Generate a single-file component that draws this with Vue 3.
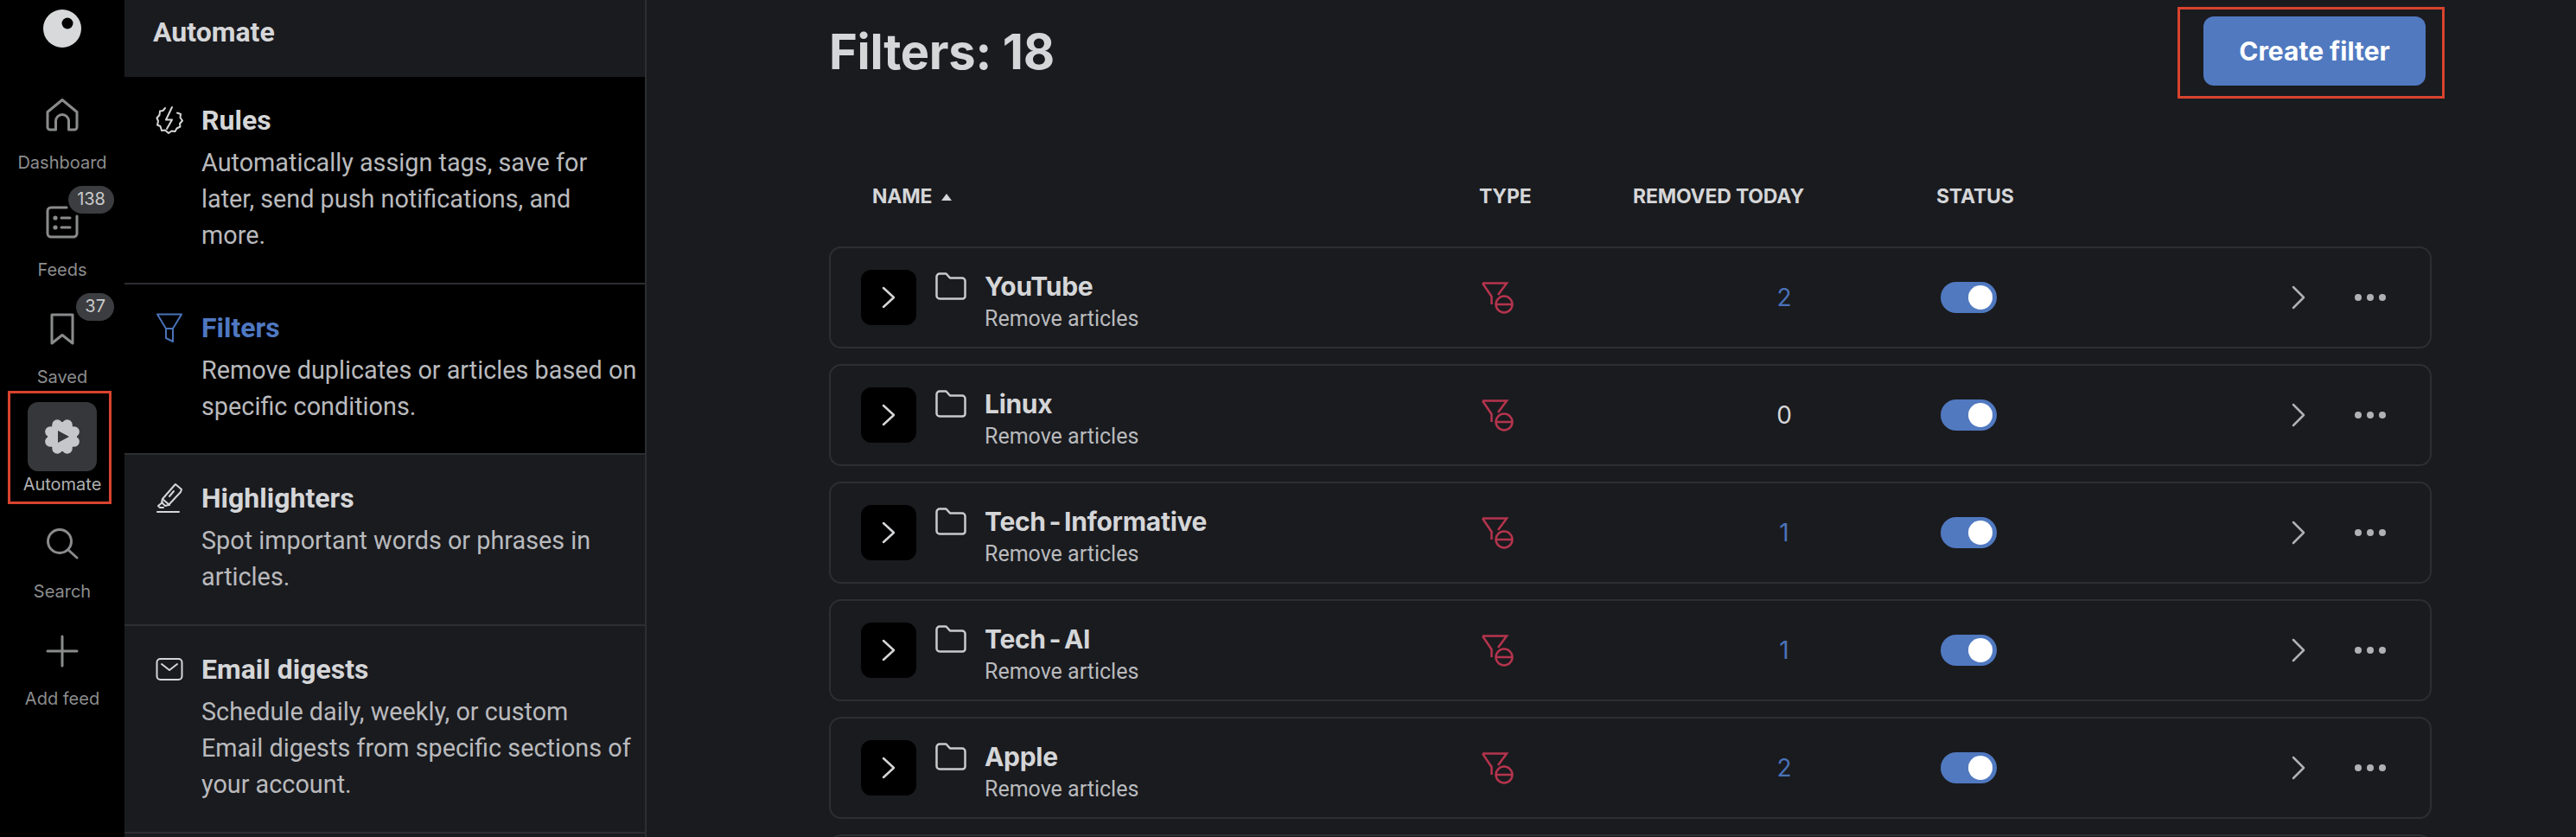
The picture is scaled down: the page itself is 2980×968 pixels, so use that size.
<template>
  <div class="app">
    <nav class="rail">
      <div class="logo">
        <svg width="44" height="44" viewBox="0 0 44 44">
          <circle cx="22" cy="22" r="22" fill="#d8d9da" />
          <circle cx="28" cy="16" r="6.5" fill="#000" />
        </svg>
      </div>
      <div v-for="item in navItems" :key="item.label" class="nav-item" :class="{ active: item.active }">
        <div class="nav-icon">
          <svg v-if="item.icon === 'home'" width="38" height="38" viewBox="0 0 38 38" class="line-icon">
            <path d="M2 15.500 19 1.500l17 14V33a3 3 0 0 1-3 3h-6.500V26a7.500 7.500 0 0 0-15 0v10H5a3 3 0 0 1-3-3z" />
          </svg>
          <svg v-else-if="item.icon === 'feeds'" width="38" height="38" viewBox="0 0 38 38" class="line-icon">
            <path d="M24 2H6a4 4 0 0 0-4 4v26a4 4 0 0 0 4 4h26a4 4 0 0 0 4-4V12" />
            <circle cx="11" cy="14" r="2.600" class="fill" />
            <circle cx="11" cy="25" r="2.600" class="fill" />
            <path d="M18 14h10M18 25h10" />
          </svg>
          <svg v-else-if="item.icon === 'saved'" width="30" height="38" viewBox="0 0 30 38" class="line-icon">
            <path d="M3 2h24v33L15 25.500 3 35z" />
          </svg>
          <svg v-else-if="item.icon === 'automate'" width="44" height="44" viewBox="0 0 44 44">
            <g fill="#c6c7ca">
              <circle cx="22" cy="22" r="17" />
              <circle v-for="lobe in lobes" :key="lobe.x" :cx="lobe.x" :cy="lobe.y" r="6" />
            </g>
            <path d="M17 15 30 22 17 29z" fill="#36373a" />
          </svg>
          <svg v-else-if="item.icon === 'search'" width="38" height="38" viewBox="0 0 38 38" class="line-icon">
            <circle cx="16" cy="16" r="13.500" />
            <path d="M26 26l10 9" />
          </svg>
          <svg v-else width="38" height="38" viewBox="0 0 38 38" class="line-icon">
            <path d="M19 2v34M2 19h34" />
          </svg>
        </div>
        <span class="nav-label">{{ item.label }}</span>
        <span v-if="item.badge" class="badge">{{ item.badge }}</span>
        <div v-if="item.active" class="red-box"></div>
      </div>
    </nav>

    <aside class="panel">
      <h2 class="panel-title">Automate</h2>
      <section
        v-for="section in sections"
        :key="section.title"
        class="section"
        :class="{ dark: section.dark, selected: section.selected, first: section.first }"
      >
        <div class="section-icon">
          <svg v-if="section.icon === 'rules'" width="32" height="34" viewBox="0 0 32 34" class="panel-icon">
            <path d="M11 3 8.500 6 5 6.500 4.500 11 1.500 14.500 3 18 2 22.500l3.500 1.500L7 29l4-.5 4 3.500 3.500-2.500 4 .5 2-3.500 4-2L28 21l3-3.500L28.500 14l.5-4-4-1.500" />
            <path d="M19 2l-7 14.500h7L13 27" />
          </svg>
          <svg v-else-if="section.icon === 'filters'" width="30" height="34" viewBox="0 0 30 34" class="panel-icon">
            <path d="M1 1.500h28L19 18H11zM11 18v11l8 4V18" />
          </svg>
          <svg v-else-if="section.icon === 'highlighters'" width="30" height="36" viewBox="0 0 30 36" class="panel-icon">
            <path d="M22 2l7 6-1 3-14 15-4 1-4-4 1-4L21 3z" />
            <path d="M8 20l7 6M20 10l-5 6" />
            <path d="M7 23l-5 4 2 2h4" />
            <path d="M1 34h25" />
          </svg>
          <svg v-else width="32" height="28" viewBox="0 0 32 28" class="panel-icon">
            <rect x="1.500" y="2" width="29" height="24" rx="4" />
            <path d="M7 8l9 7 9-7" />
          </svg>
        </div>
        <div>
          <h3 class="section-title">{{ section.title }}</h3>
          <p class="section-desc" v-html="section.desc"></p>
        </div>
      </section>
      <div class="section-end"></div>
    </aside>

    <main class="main">
      <header class="top">
        <h1 class="page-title">Filters: 18</h1>
        <button class="create">
          Create filter
          <span class="red-box button-box"></span>
        </button>
      </header>

      <div class="thead">
        <span class="th th-name">NAME <i class="sort"></i></span>
        <span class="th th-type">TYPE</span>
        <span class="th th-removed">REMOVED TODAY</span>
        <span class="th">STATUS</span>
      </div>

      <div class="rows">
        <div v-for="row in rows" :key="row.name" class="row">
          <div class="name-cell">
            <div class="expand">
              <svg width="16" height="26" viewBox="0 0 16 26" class="chevron">
                <path d="M2 2l12 11L2 24" />
              </svg>
            </div>
            <svg width="36" height="32" viewBox="0 0 36 32" class="folder">
              <path d="M1.500 5a3.500 3.500 0 0 1 3.500-3.500h7.500L17 6.500h14a3.500 3.500 0 0 1 3.500 3.500v17.500a3 3 0 0 1-3 3H5a3.500 3.500 0 0 1-3.500-3.500z" />
            </svg>
            <div>
              <div class="row-name">{{ row.name }}</div>
              <div class="row-sub">Remove articles</div>
            </div>
          </div>
          <div class="type-cell">
            <svg width="38" height="37" viewBox="0 0 38 37" class="type-icon">
              <path d="M1 1.500h28L19 15M1 1.500 11.500 17v9" />
              <circle cx="26" cy="26" r="9.500" />
              <path d="M17 26h18" />
            </svg>
          </div>
          <div class="count" :class="{ zero: row.count === 0 }">{{ row.count }}</div>
          <div class="status-cell">
            <span class="toggle"><span class="knob"></span></span>
          </div>
          <div class="go-cell">
            <svg width="16" height="28" viewBox="0 0 16 28" class="chevron dim">
              <path d="M2 2l12 12L2 26" />
            </svg>
          </div>
          <div class="more"><i></i><i></i><i></i></div>
        </div>
        <!-- next row only just shows at the bottom of the window -->
        <div class="row"></div>
      </div>
    </main>
  </div>
</template>

<script setup>
const navItems = [
  { label: 'Dashboard', icon: 'home' },
  { label: 'Feeds', icon: 'feeds', badge: '138' },
  { label: 'Saved', icon: 'saved', badge: '37' },
  { label: 'Automate', icon: 'automate', active: true },
  { label: 'Search', icon: 'search' },
  { label: 'Add feed', icon: 'add' },
]

// lobes of the gear around its centre
const lobes = Array.from({ length: 8 }, (_, i) => {
  const a = (i * Math.PI) / 4 + Math.PI / 8
  return { x: 22 + 15 * Math.cos(a), y: 22 + 15 * Math.sin(a) }
})

const sections = [
  {
    title: 'Rules',
    icon: 'rules',
    first: true,
    desc: 'Automatically assign tags, save for<br>later, send push notifications, and<br>more.',
  },
  {
    title: 'Filters',
    icon: 'filters',
    selected: true,
    desc: 'Remove duplicates or articles based on<br>specific conditions.',
  },
  {
    title: 'Highlighters',
    icon: 'highlighters',
    dark: true,
    desc: 'Spot important words or phrases in<br>articles.',
  },
  {
    title: 'Email digests',
    icon: 'email',
    dark: true,
    desc: 'Schedule daily, weekly, or custom<br>Email digests from specific sections of<br>your account.',
  },
]

const rows = [
  { name: 'YouTube', count: 2 },
  { name: 'Linux', count: 0 },
  { name: 'Tech - Informative', count: 1 },
  { name: 'Tech - AI', count: 1 },
  { name: 'Apple', count: 2 },
]
</script>

<style>
html,
body {
  background: #1a1b1f;
  overflow: hidden;
}
</style>

<style scoped>
.app {
  display: flex;
  height: 968px;
  overflow: hidden;
  background: #1a1b1f;
  font-family: Inter, "Liberation Sans", sans-serif;
}

.rail {
  flex: 0 0 144px;
  background: #000;
}

.logo {
  display: flex;
  justify-content: center;
  height: 88px;
  padding-top: 11px;
  box-sizing: border-box;
}

.nav-item {
  position: relative;
  height: 124px;
  padding-top: 5px;
  box-sizing: border-box;
  text-align: center;
}

.nav-icon {
  display: flex;
  align-items: center;
  justify-content: center;
  width: 80px;
  height: 80px;
  margin: 0 auto;
  border-radius: 12px;
}

.nav-item.active .nav-icon {
  background: #36373a;
}

.line-icon {
  fill: none;
  stroke: #8a8b8c;
  stroke-width: 3;
  stroke-linecap: round;
  stroke-linejoin: round;
}

.line-icon .fill {
  fill: #8a8b8c;
  stroke: none;
}

.nav-label {
  display: block;
  font-size: 20px;
  line-height: 30px;
  color: #8c8d8e;
}

.nav-item.active .nav-label {
  color: #aeafb1;
}

.badge {
  position: absolute;
  top: 3px;
  right: 12px;
  height: 32px;
  padding: 0 10px;
  border-radius: 16px;
  background: #3c3d40;
  color: #c9cacb;
  font-size: 20px;
  line-height: 31px;
}

.red-box {
  position: absolute;
  top: -8px;
  left: 9px;
  width: 120px;
  height: 131px;
  border: 3px solid #d9432e;
  box-sizing: border-box;
  pointer-events: none;
}

.panel {
  flex: 0 0 604px;
  box-sizing: border-box;
  border-right: 2px solid #2d2e32;
  background: #1a1b1f;
  font-family: Roboto, "Liberation Sans", sans-serif;
}

.panel-title {
  height: 87px;
  margin: 0;
  padding: 16px 0 0 33px;
  box-sizing: border-box;
  color: #d5d6d8;
  font-family: Roboto, sans-serif;
  font-size: 32px;
  font-weight: 700;
  line-height: 42px;
}

.section {
  display: flex;
  gap: 17px;
  padding: 29px 0 34px 32px;
  border-top: 2px solid #2d2e32;
  background: #000;
}

.section.first {
  border-top-color: #1a1b1f;
}

.section.selected {
  padding-bottom: 33px;
}

.section.dark {
  background: #1a1b1f;
}

.section-end {
  border-top: 2px solid #2d2e32;
}

.section-icon {
  display: flex;
  justify-content: center;
  align-items: center;
  flex: 0 0 40px;
  height: 42px;
}

.panel-icon {
  fill: none;
  stroke: #d5d6d8;
  stroke-width: 2;
  stroke-linecap: round;
  stroke-linejoin: round;
}

.selected .panel-icon {
  stroke: #4a72b8;
}

.section-title {
  margin: 0 0 7px;
  color: #d5d6d8;
  font-size: 32px;
  font-weight: 700;
  line-height: 42px;
}

.selected .section-title {
  color: #4f78c2;
}

.section-desc {
  margin: 0;
  color: #b9babd;
  font-size: 28.8px;
  line-height: 42px;
  white-space: nowrap;
}

.main {
  flex: 1;
  min-width: 0;
  padding: 19px 167px 0 211px;
}

.top {
  display: flex;
  justify-content: space-between;
  align-items: flex-start;
  padding-right: 7px;
}

.page-title {
  margin: 0;
  color: #d5d6d8;
  font-size: 56px;
  font-weight: 700;
  line-height: 82px;
  letter-spacing: -0.3px;
}

.create {
  position: relative;
  width: 257px;
  height: 80px;
  border: 0;
  border-radius: 12px;
  background: #5079c0;
  color: #fff;
  font-family: inherit;
  font-size: 30px;
  font-weight: 700;
}

.button-box {
  top: -11px;
  left: -30px;
  width: 309px;
  height: 106px;
}

.thead {
  display: flex;
  align-items: center;
  height: 36px;
  margin-top: 108px;
  padding-left: 50px;
}

.th {
  color: #d5d6d8;
  font-size: 23px;
  font-weight: 700;
  line-height: 36px;
  letter-spacing: -0.2px;
}

.th-name {
  flex: 0 0 702px;
}

.th-type {
  flex: 0 0 178px;
}

.th-removed {
  flex: 0 0 351px;
}

.sort {
  display: inline-block;
  width: 0;
  height: 0;
  margin-left: 5px;
  border-left: 6px solid transparent;
  border-right: 6px solid transparent;
  border-bottom: 8px solid #d5d6d8;
  vertical-align: 3px;
}

.rows {
  display: flex;
  flex-direction: column;
  gap: 18px;
  margin-top: 40px;
}

.row {
  display: grid;
  grid-template-columns: 718px 300px 100px 196px 355px 95px;
  flex: 0 0 118px;
  align-items: center;
  box-sizing: border-box;
  padding-left: 35px;
  border: 2px solid #2d2e32;
  border-radius: 14px;
}

.name-cell {
  display: flex;
  align-items: flex-start;
  height: 64px;
}

.expand {
  display: flex;
  align-items: center;
  justify-content: center;
  width: 64px;
  height: 64px;
  border-radius: 12px;
  background: #000;
}

.chevron {
  fill: none;
  stroke: #d5d6d8;
  stroke-width: 2.500;
  stroke-linecap: round;
  stroke-linejoin: round;
}

.chevron.dim {
  stroke: #b0b1b3;
}

.folder {
  margin: 3px 21px 0 22px;
  fill: none;
  stroke: #c9cacc;
  stroke-width: 2.500;
  stroke-linejoin: round;
}

.row-name {
  color: #d5d6d8;
  font-size: 30px;
  font-weight: 700;
  line-height: 38px;
  letter-spacing: -0.3px;
  word-spacing: -3px;
  white-space: nowrap;
}

.row-sub {
  margin-top: 1px;
  color: #b9babd;
  font-family: Roboto, sans-serif;
  font-size: 25px;
  line-height: 36px;
  white-space: nowrap;
}

.type-cell {
  display: flex;
  align-items: center;
  height: 40px;
}

.type-icon {
  fill: none;
  stroke: #b5344d;
  stroke-width: 2.500;
}

.count {
  color: #4a72b8;
  font-size: 28px;
  text-align: center;
}

.count.zero {
  color: #d5d6d8;
}

.status-cell,
.go-cell {
  display: flex;
  justify-content: flex-end;
}

.go-cell {
  margin-right: -2px;
}

.toggle {
  display: flex;
  align-items: center;
  justify-content: flex-end;
  width: 65px;
  height: 36px;
  padding-right: 5px;
  box-sizing: border-box;
  border-radius: 18px;
  background: #5079c0;
}

.knob {
  width: 28px;
  height: 28px;
  border-radius: 50%;
  background: #fff;
}

.more {
  display: flex;
  justify-content: flex-end;
  gap: 6px;
}

.more i {
  width: 8px;
  height: 8px;
  border-radius: 50%;
  background: #b0b1b3;
}
</style>
